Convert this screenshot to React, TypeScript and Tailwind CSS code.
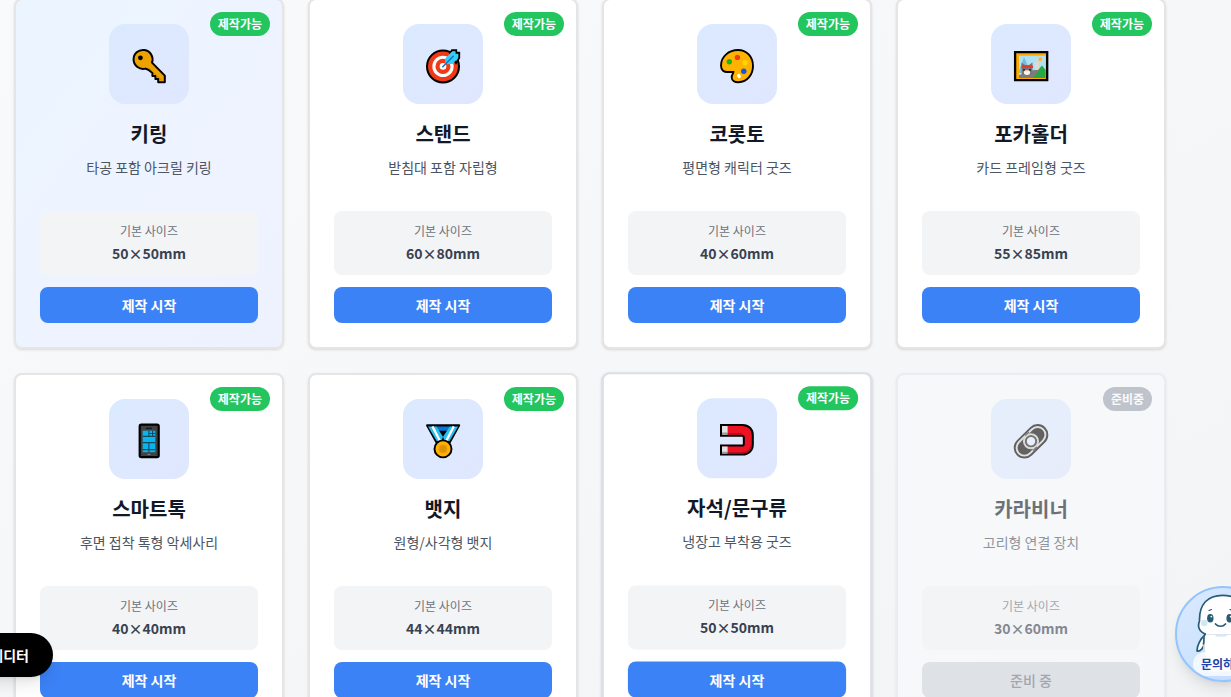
import React from "react";

type IconProps = { children: React.ReactNode };

function Icon({ children }: IconProps) {
  return (
    <svg viewBox="0 0 40 40" className="mt-1 h-10 w-10" fill="none">
      {children}
    </svg>
  );
}

const KeyIcon = () => (
  <Icon>
    <path
      d="M23 16.6 35.8 29.6V36.3H29.2V32.9H26.4V30H23.4V27.1L20.6 24.7L18 23.2L16.4 22.6A9.5 9.5 0 1 1 23 16.6Z"
      fill="#eda200"
      stroke="#000"
      strokeWidth="2"
      strokeLinejoin="round"
    />
    <path d="M19.8 22 33 34.6" stroke="#c98600" strokeWidth="1" />
    <circle cx="11.4" cy="11.8" r="2.4" fill="#000" />
  </Icon>
);

const TargetIcon = () => (
  <Icon>
    <circle cx="20" cy="20.4" r="16" fill="#f03a17" stroke="#000" strokeWidth="2" />
    <path d="M27 7 L29 4.2 H33.2 V6.8 H36.2 V12 L33 17Z" fill="#48cff5" stroke="#000" strokeWidth="1.9" />
    <circle cx="20" cy="20.4" r="9.1" stroke="#fff" strokeWidth="3.1" />
    <circle cx="20" cy="20.4" r="3.3" fill="#fff" />
    <path d="M22 17.6 22.5 12 28.5 6 32.5 5.6 32.3 8.3 35.2 8.4 35 12 29.5 18 24 18.2Z" fill="#35cdf5" />
    <path d="M19.8 20.7 30.2 10.3" stroke="#0878d4" strokeWidth="1.6" strokeLinecap="round" />
  </Icon>
);

const PaletteIcon = () => (
  <Icon>
    <path
      d="M21 4C12 4 4 10.5 4 19.5C4 24.5 7 26.2 11 26H16.4C16.4 27.7 14.6 28.6 14.7 31.5C14.8 34.8 18 36.3 21.5 36.2C30.5 35.8 36 28.5 36 20C36 10.5 29.5 4 21 4Z"
      fill="#ffb300"
      stroke="#000"
      strokeWidth="1.9"
    />
    <circle cx="12.3" cy="15.7" r="2.7" fill="#16b40e" />
    <circle cx="20.4" cy="11.4" r="2.7" fill="#ee3d19" />
    <circle cx="28" cy="16.7" r="2.7" fill="#ffd400" />
    <circle cx="26.8" cy="25.3" r="2.7" fill="#1257df" />
    <ellipse cx="22" cy="30" rx="1.8" ry="2.2" transform="rotate(-45 22 30)" fill="#fff" />
  </Icon>
);

const FrameIcon = () => (
  <Icon>
    <path d="M4.1 6.2H36.2V34.2H4.1Z" fill="#ffab00" stroke="#000" strokeWidth="2.3" />
    <path d="M8 9.7H34.7V32H8Z" fill="#aee2f3" />
    <path d="M8 25 13 11 20 27H8Z" fill="#76bcdf" />
    <path d="M24 16H28V27H24ZM26 12H32V15H26Z" fill="#ddd9d3" />
    <circle cx="29.3" cy="13.2" r="2" fill="#ffb536" />
    <path d="M20 32C23 27 26 25 28 23L31 19.5 34.7 24V32Z" fill="#28a745" />
    <path d="M8 32V29L15 27 23 24 28 24 22 32Z" fill="#7d7c7e" />
    <path d="M10.6 28V16.5L14 19H18L21.5 16.5V28L18 29.6H13Z" fill="#777578" />
    <path d="M10.5 19.6H22V22H10.5Z" fill="#ed3922" />
    <circle cx="13" cy="23.8" r=".9" fill="#111" />
    <circle cx="19" cy="23.8" r=".9" fill="#111" />
    <ellipse cx="16" cy="26.4" rx="3.1" ry="2.5" fill="#fff1e7" />
    <path d="M15.2 24.6H16.8L16 25.6Z" fill="#e66a4d" />
  </Icon>
);

const PhoneIcon = () => (
  <Icon>
    <rect x="10.7" y="3.7" width="19" height="32.4" rx="1.6" fill="#424242" stroke="#000" strokeWidth="2.2" />
    <path d="M13.7 9.7H26.3V31.2H13.7Z" fill="#08b5ed" />
    <path d="M17 7.3H23" stroke="#111" strokeWidth="1.1" />
    <path d="M18.7 33.4H21.3" stroke="#888" strokeWidth="1" />
    <path
      d="M13.7 15.4H26.3M13.7 28.6H26.3M13.7 21.6H26.3M19.9 9.7V15.4M19.9 21.6V31.2M20 12.5H26.3M23.6 9.7V15.4"
      stroke="#17485c"
      strokeWidth="1.1"
    />
  </Icon>
);

const MedalIcon = () => (
  <Icon>
    <path d="M4 4.3H36.2L26.4 22H13.8Z" fill="#000" stroke="#000" strokeWidth="2" strokeLinejoin="round" />
    <path d="M12 5.4H28.5L24.5 9.7H15.7Z" fill="#0876d6" />
    <path d="M5.1 5.4H13.4L20 15.8 18.5 20H13.6Z" fill="#29bdf0" />
    <path d="M35.1 5.4H26.8L20 15.8 21.5 20H26.6Z" fill="#29bdf0" />
    <path d="M9.4 5.4 17 20M30.8 5.4 23.2 20" stroke="#fff" strokeWidth="2.3" />
    <circle cx="20" cy="27.9" r="8.5" fill="#ffb000" stroke="#000" strokeWidth="1.9" />
    <circle cx="20" cy="27.9" r="4" fill="#db920b" stroke="#ee9d00" />
  </Icon>
);

const MagnetIcon = () => (
  <Icon>
    <path
      d="M4 4.7H25.5C31.6 4.7 35.8 8.8 35.8 14.8V24.2C35.8 30.2 31.6 34.3 25.5 34.3H4V25.2H25.2Q26.8 25.2 26.8 23.6V17.4Q26.8 15.5 25.2 15.5H4Z"
      fill="#ec1123"
      stroke="#000"
      strokeWidth="2"
    />
    <path d="M5 5.8H10.6V14.4H5ZM5 26.3H10.6V33.2H5Z" fill="#e2e2e2" />
    <path d="M5 12.3H10.6V14.4H5ZM5 31.4H10.6V33.2H5Z" fill="#999" />
    <path d="M10.6 13.4H25M10.6 32.4H25C30 32.4 33.5 30 34.4 25" stroke="#b70e20" strokeWidth="1.5" />
  </Icon>
);

const LinkIcon = () => (
  <Icon>
    <g strokeLinecap="round">
      <path d="M13.4 26.8 26.6 13.8" stroke="#000" strokeWidth="21.4" />
      <path d="M13.4 26.8 26.6 13.8" stroke="#d7d4d0" strokeWidth="17.6" />
      <path d="M13.4 26.8 26.6 13.8" stroke="#000" strokeWidth="13.8" />
    </g>
    <circle cx="20" cy="20.3" r="7" stroke="#c9c7c4" strokeWidth="2.1" />
    <circle cx="20" cy="20.3" r="5" fill="#e3eafe" stroke="#222" strokeWidth="1.6" />
    <path d="M14.2 14.5 18 11M25.8 26 22 29.6" stroke="#222" strokeWidth="1.2" />
  </Icon>
);

type Product = {
  name: string;
  desc: string;
  size: string;
  icon: React.ReactNode;
  state?: "selected" | "hover" | "disabled";
};

const products: Product[] = [
  { name: "키링", desc: "타공 포함 아크릴 키링", size: "50×50mm", icon: <KeyIcon />, state: "selected" },
  { name: "스탠드", desc: "받침대 포함 자립형", size: "60×80mm", icon: <TargetIcon /> },
  { name: "코롯토", desc: "평면형 캐릭터 굿즈", size: "40×60mm", icon: <PaletteIcon /> },
  { name: "포카홀더", desc: "카드 프레임형 굿즈", size: "55×85mm", icon: <FrameIcon /> },
  { name: "스마트톡", desc: "후면 접착 톡형 악세사리", size: "40×40mm", icon: <PhoneIcon /> },
  { name: "뱃지", desc: "원형/사각형 뱃지", size: "44×44mm", icon: <MedalIcon /> },
  { name: "자석/문구류", desc: "냉장고 부착용 굿즈", size: "50×50mm", icon: <MagnetIcon />, state: "hover" },
  { name: "카라비너", desc: "고리형 연결 장치", size: "30×60mm", icon: <LinkIcon />, state: "disabled" },
];

const cardStyles = {
  default: "border-[#e7e5e4] bg-white",
  selected: "border-[#e7e5e4] bg-linear-to-br from-[#ebf5ff] via-[#eef4ff] to-[#eef2ff]",
  hover: "border-[#dcdfe9] bg-white -translate-y-[0.6px] scale-[1.001]",
  disabled: "border-[#e5e7eb] bg-[#f9fafb] opacity-60",
};

function ProductCard({ name, desc, size, icon, state }: Product) {
  const disabled = state === "disabled";
  return (
    <article
      className={`relative flex h-[351px] flex-col items-center rounded-lg border-2 p-6 text-center shadow-sm ${cardStyles[state ?? "default"]}`}
    >
      <span
        className={`absolute top-3 right-3 rounded-full px-2 py-1 text-xs font-bold text-white ${disabled ? "bg-[#9ca3af]" : "bg-[#22c55e]"}`}
      >
        {disabled ? "준비중" : "제작가능"}
      </span>
      <div className="mb-4 flex h-20 w-20 shrink-0 items-center justify-center rounded-2xl bg-linear-to-br from-[#dbeafe] to-[#e0e7ff]">
        {icon}
      </div>
      <h3 className="mb-2 text-xl leading-7 font-bold text-[#111827]">{name}</h3>
      <p className="flex-1 text-sm leading-[22px] text-[#4b5563]">{desc}</p>
      <div className="mb-3 w-full rounded-lg bg-[#f3f4f6] p-3">
        <div className="mb-1 text-xs text-[#6b7280]">기본 사이즈</div>
        <div className="text-sm font-semibold text-[#374151]">{size}</div>
      </div>
      <button
        className={`h-9 w-full shrink-0 rounded-lg text-sm ${disabled ? "bg-[#d1d5db] font-medium text-[#6b7280]" : "bg-[#3b82f6] font-bold text-white"}`}
      >
        {disabled ? "준비 중" : "제작 시작"}
      </button>
    </article>
  );
}

function ChatButton() {
  return (
    <button className="absolute top-[586px] left-[1175px] h-24 w-24 overflow-hidden rounded-full border-2 border-[#93c5fd] bg-linear-to-br from-[#dbeafe] to-[#bfdbfe] shadow-lg">
      <svg viewBox="0 0 92 92" className="absolute inset-0 h-[92px] w-[92px]" fill="none">
        <g stroke="#285b75" strokeWidth="1.7" strokeLinecap="round" strokeLinejoin="round">
          <path d="M28 47C23 51 20 58 20 63C23 64 27 60 28 54" fill="#fff" />
          <path d="M64 47C69 51 72 58 72 63C69 64 65 60 64 54" fill="#fff" />
          <path d="M28 46C25 59 29 76 32 84H60C64 76 67 59 64 46Z" fill="#fff" stroke="#d4dfea" />
          <path
            d="M28 46C22 43 20 39 22.5 33C22 16 31 7.3 45.5 7.3C60 7.3 69 16 69 33C71 39 69 43 63 46"
            fill="#fff"
          />
          <path d="M38.5 36C41 39 46 39 48.5 36" />
          <path d="M32 22.5 34.5 21.5M53 21.5 55.5 22.5" strokeWidth="1.2" />
          <path d="M28 46C26 49 27.5 52 26.5 56" />
        </g>
        <ellipse cx="33.3" cy="30.3" rx="3.2" ry="4.3" fill="#285b75" />
        <ellipse cx="52.6" cy="30.3" rx="3.2" ry="4.3" fill="#285b75" />
        <circle cx="34.3" cy="28.6" r=".9" fill="#fff" />
        <circle cx="53.6" cy="28.6" r=".9" fill="#fff" />
        <circle cx="27.3" cy="35" r="3.2" fill="#cfe8f7" />
        <circle cx="61" cy="35" r="3.2" fill="#cfe8f7" />
        <path d="M38.5 47.3C42 48 46 48 49.5 47.3" stroke="#c5e5f3" strokeWidth="1.3" />
      </svg>
      <span className="absolute bottom-1 left-4 rounded-full bg-white/75 px-2 py-1 text-xs font-bold whitespace-nowrap text-[#1e40af]">
        문의하기
      </span>
    </button>
  );
}

export default function App() {
  return (
    <main className="relative h-screen overflow-hidden bg-linear-to-br from-[#f9fafb] to-[#f3f4f6] font-['Noto_Sans_CJK_KR',sans-serif]">
      <div className="-mt-0.5 ml-3.5 grid w-[1152px] grid-cols-4 gap-6">
        {products.map((product) => (
          <ProductCard key={product.name} {...product} />
        ))}
      </div>
      <button className="absolute top-[633px] right-[1178px] h-11 rounded-full bg-black px-6 text-sm font-bold whitespace-nowrap text-white shadow-lg">
        에디터
      </button>
      <ChatButton />
    </main>
  );
}
